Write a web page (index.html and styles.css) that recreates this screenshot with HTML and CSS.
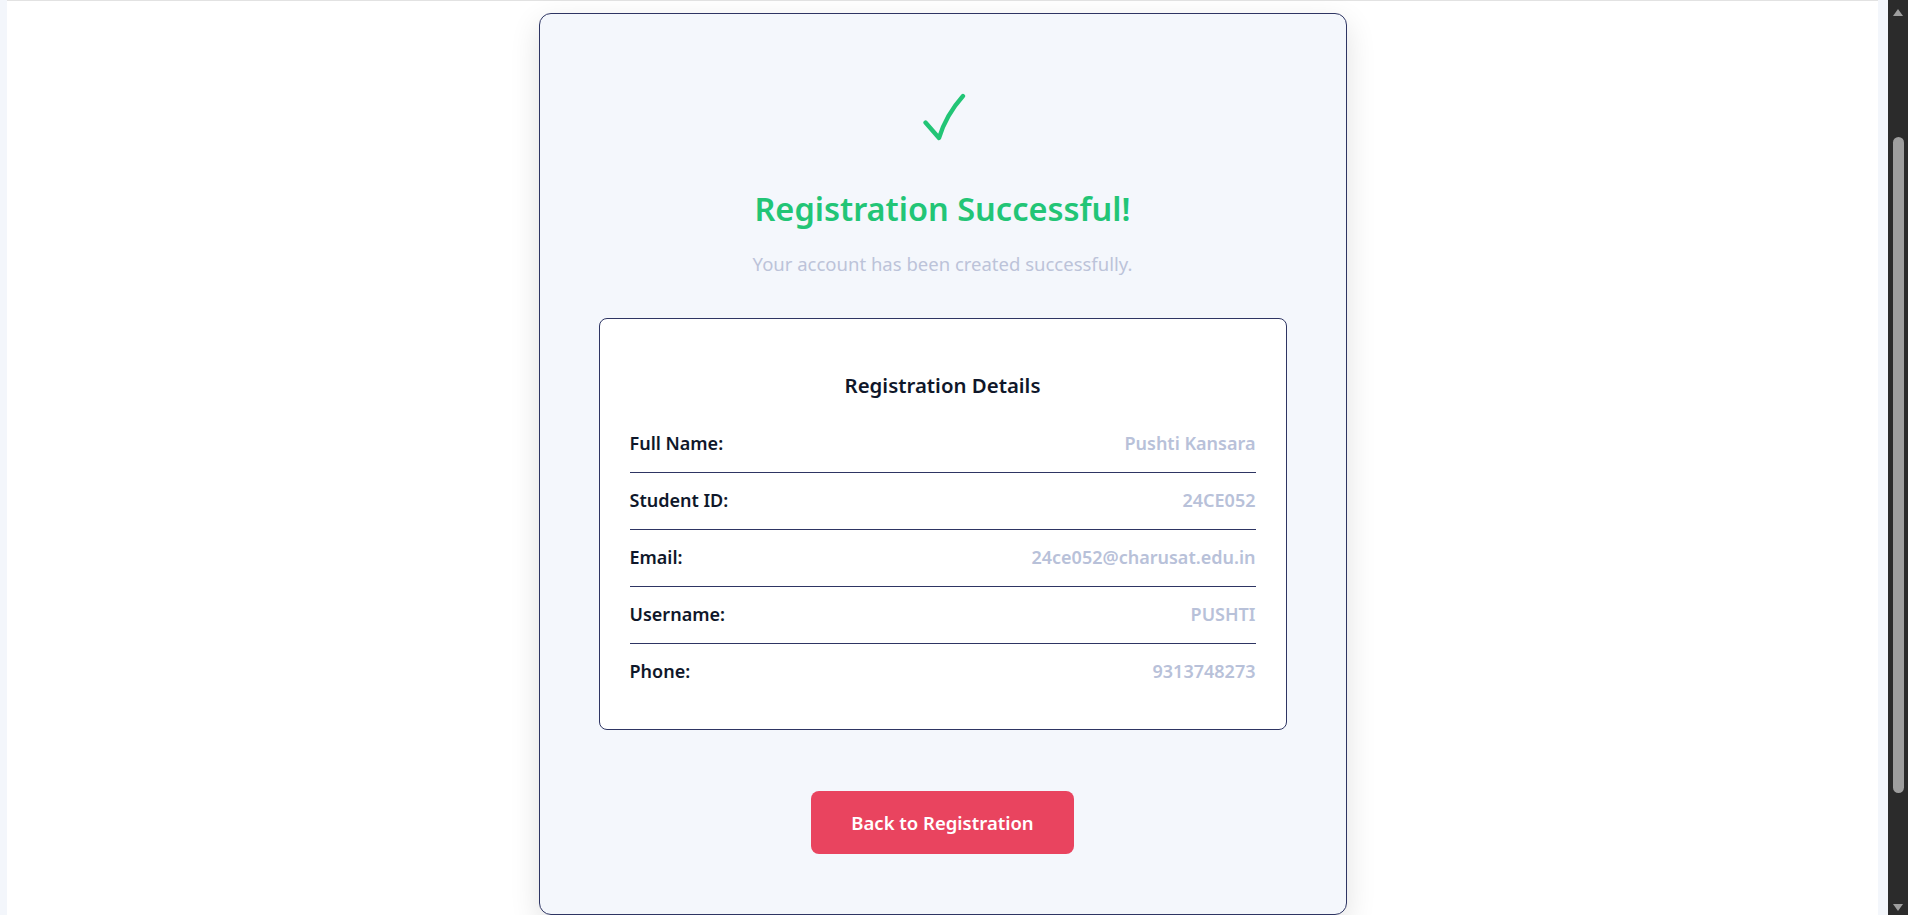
FILE: index.html
```html
<!DOCTYPE html>
<html lang="en">
<head>
<meta charset="utf-8">
<title>Registration Successful</title>
<link rel="stylesheet" href="styles.css">
</head>
<body>
<div class="viewport">
  <div class="page">
    <main class="sheet">
      <section class="card">
        <div class="icon">
          <svg width="44" height="48" viewBox="0 0 44 48" aria-hidden="true">
            <path d="M3.5 29.5 L17 45 Q24 22 41 3" fill="none" stroke="#22c576" stroke-width="4.3" stroke-linecap="round" stroke-linejoin="round"/>
          </svg>
        </div>
        <h1 class="title">Registration Successful!</h1>
        <p class="subtitle">Your account has been created successfully.</p>
        <div class="details">
          <h3 class="details-title">Registration Details</h3>
          <div class="row"><span class="label">Full Name:</span><span class="value">Pushti Kansara</span></div>
          <div class="row"><span class="label">Student ID:</span><span class="value">24CE052</span></div>
          <div class="row"><span class="label">Email:</span><span class="value">24ce052@charusat.edu.in</span></div>
          <div class="row"><span class="label">Username:</span><span class="value">PUSHTI</span></div>
          <div class="row last"><span class="label">Phone:</span><span class="value">9313748273</span></div>
        </div>
        <button class="btn" type="button">Back to Registration</button>
      </section>
    </main>
  </div>
  <div class="scrollbar">
    <div class="arrow up"></div>
    <div class="track"><div class="thumb"></div></div>
    <div class="arrow down"></div>
  </div>
</div>
</body>
</html>
```

FILE: styles.css
```css
html, body {
  margin: 0;
  padding: 0;
  height: 100%;
  overflow: hidden;
}
body {
  font-family: "Noto Sans", "Open Sans", sans-serif;
  background: #f3f6fb;
}
.viewport {
  display: flex;
  height: 915px;
}
.page {
  flex: 1;
  background: #f3f6fb;
  padding: 0 10px 0 7px;
  display: flex;
}
.sheet {
  flex: 1;
  background: #ffffff;
  border-top: 1px solid #e2e2e2;
  display: flex;
  justify-content: center;
  align-items: flex-start;
  padding-top: 12px;
}
.card {
  width: 688px;
  background: #f4f7fc;
  border: 1px solid #2e3563;
  border-radius: 12px;
  padding: 60px 59px;
  box-shadow: 0 10px 30px rgba(0, 0, 0, 0.12);
  display: flex;
  flex-direction: column;
  align-items: center;
  text-align: center;
}
.icon {
  margin-top: 19px;
  height: 48px;
  line-height: 0;
  padding-left: 2px;
}
.title {
  margin: 47px 0 0;
  font-size: 32.5px;
  font-weight: 600;
  line-height: 42px;
  color: #22c576;
}
.subtitle {
  margin: 21px 0 0;
  font-size: 18.5px;
  line-height: 26px;
  color: #bcc3d9;
}
.details {
  align-self: stretch;
  margin-top: 41px;
  background: #ffffff;
  border: 1px solid #2e3563;
  border-radius: 8px;
  padding: 30px 30px 29px;
  text-align: left;
}
.details-title {
  margin: 21px 0 16px;
  font-size: 20.4px;
  font-weight: 600;
  line-height: 30px;
  text-align: center;
  color: #0f172a;
}
.row {
  display: flex;
  justify-content: space-between;
  align-items: center;
  padding: 15px 0 17px;
  line-height: 24px;
  border-bottom: 1px solid #2e3563;
  font-size: 18px;
  font-weight: 600;
}
.row.last {
  border-bottom: none;
}
.label {
  color: #0f172a;
}
.value {
  color: #b8c1d9;
}
.btn {
  margin-top: 61px;
  width: 263px;
  height: 63px;
  border: none;
  border-radius: 8px;
  background: #e9445f;
  color: #ffffff;
  font-family: inherit;
  font-size: 18.5px;
  font-weight: 600;
  cursor: pointer;
}
.scrollbar {
  width: 20px;
  background: #2b2b2b;
  display: flex;
  flex-direction: column;
  align-items: center;
}
.arrow {
  width: 0;
  height: 0;
  border-left: 5px solid transparent;
  border-right: 5px solid transparent;
}
.arrow.up {
  margin-top: 9px;
  border-bottom: 7px solid #9e9e9e;
}
.arrow.down {
  margin-bottom: 4px;
  border-top: 7px solid #9e9e9e;
}
.track {
  flex: 1;
  width: 100%;
  display: flex;
  justify-content: center;
}
.thumb {
  margin-top: 121px;
  width: 11px;
  height: 656px;
  background: #9e9e9e;
  border-radius: 6px;
}
```
